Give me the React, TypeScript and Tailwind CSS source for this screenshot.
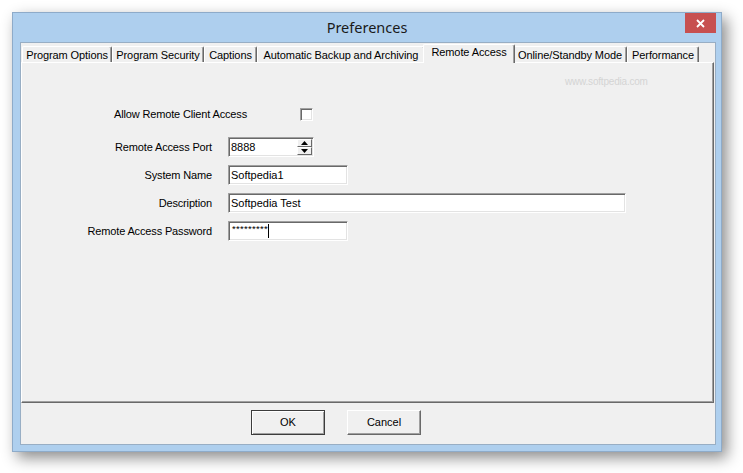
import React from "react";

const tabs = [
  { label: "Program Options", w: "w-[90px]" },
  { label: "Program Security", w: "w-[92px]" },
  { label: "Captions", w: "w-[53px]" },
  { label: "Automatic Backup and Archiving", w: "w-[168px]" },
  { label: "Remote Access", w: "w-[92px]", active: true },
  { label: "Online/Standby Mode", w: "w-[114px]" },
  { label: "Performance", w: "w-[72px]" },
];

const sunken =
  "bg-white border border-t-[#a0a0a0] border-l-[#a0a0a0] border-b-white border-r-white shadow-[inset_1px_1px_0_#696969,inset_-1px_-1px_0_#e3e3e3]";

function Field({ label, children }: { label: string; children: React.ReactNode }) {
  return (
    <div className="flex items-center h-[20px] mt-[8px]">
      <div className="w-[190px] text-right leading-none tracking-[-0.15px]">{label}</div>
      <div className="ml-[16px] h-full">{children}</div>
    </div>
  );
}

function SpinArrow({ up }: { up?: boolean }) {
  return (
    <div className="flex-1 flex items-center justify-center bg-[#f0f0f0] border border-t-white border-l-white border-b-[#696969] border-r-[#696969]">
      <svg width="7" height="4" viewBox="0 0 7 4">
        {up ? <path d="M0 4 L3.5 0 L7 4 Z" fill="#000" /> : <path d="M0 0 L3.5 4 L7 0 Z" fill="#000" />}
      </svg>
    </div>
  );
}

export default function App() {
  return (
    <div
      className="w-[743px] h-[473px] bg-white pt-[12px] pl-[12px] text-[11px] text-black"
      style={{ fontFamily: '"Liberation Sans", Arial, sans-serif' }}
    >
      <div className="w-[710px] h-[440px] flex flex-col bg-[#aecfee] border border-[#8eabc9] shadow-[5px_6px_14px_rgba(0,0,0,0.45)]">
        {/* title bar */}
        <div className="relative h-[29px] flex items-center justify-center">
          <span
            className="text-[14.5px] text-[#1a1a1a] pt-[1px]"
            style={{ fontFamily: '"Noto Sans", "Open Sans", sans-serif' }}
          >
            Preferences
          </span>
          <div className="absolute right-[5px] top-0 w-[31px] h-[20px] bg-[#c75050] flex items-center justify-center">
            <svg width="9" height="9" viewBox="0 0 9 9">
              <path d="M1 1 L8 8 M8 1 L1 8" stroke="#fff" strokeWidth="1.8" />
            </svg>
          </div>
        </div>

        {/* client area */}
        <div className="ml-[7px] w-[696px] h-[403px] bg-[#f0f0f0] border border-[#98aec4] flex flex-col">
          {/* tab strip */}
          <div className="mt-[1px] h-[18px] pl-[1px] flex items-end tracking-[-0.1px]">
            {tabs.map((t) =>
              t.active ? (
                <div
                  key={t.label}
                  className={`${t.w} relative z-10 -mx-[2px] -mb-[1px] h-[19px] flex items-center justify-center pb-[3px] bg-[#f0f0f0] border-t border-l border-white border-r border-r-[#696969] shadow-[inset_-1px_0_0_#a0a0a0] rounded-t-[2px]`}
                >
                  {t.label}
                </div>
              ) : (
                <div
                  key={t.label}
                  className={`${t.w} h-[16px] flex items-center justify-center pt-[1px] bg-[#f0f0f0] border-t border-l border-white border-r border-r-[#696969] shadow-[inset_-1px_0_0_#a0a0a0] rounded-t-[2px] whitespace-nowrap`}
                >
                  {t.label}
                </div>
              )
            )}
          </div>

          {/* tab panel */}
          <div className="relative w-[693px] h-[341px] border-t border-l border-white border-r border-b border-r-[#696969] border-b-[#696969] shadow-[inset_-1px_-1px_0_#a0a0a0] flex flex-col">
            <div className="absolute left-[543px] top-[11px] text-[10px] text-[#d4d4d4] tracking-[-0.2px]">
              www.softpedia.com
            </div>

            <div className="mt-[45px] h-[13px] flex items-center">
              <span className="pl-[92px] w-[278px] leading-none tracking-[-0.15px]">Allow Remote Client Access</span>
              <div className={`w-[13px] h-[13px] ${sunken}`} />
            </div>

            <div className="mt-[8px]">
              <Field label="Remote Access Port">
                <div className={`w-[86px] h-full flex ${sunken}`}>
                  <span className="flex-1 pl-[2px] pt-[2px] leading-[14px]">8888</span>
                  <div className="w-[15px] flex flex-col my-[1px] mr-[1px]">
                    <SpinArrow up />
                    <SpinArrow />
                  </div>
                </div>
              </Field>
            </div>
            <Field label="System Name">
              <div className={`w-[120px] h-full pl-[2px] pt-[2px] leading-[14px] ${sunken}`}>Softpedia1</div>
            </Field>
            <Field label="Description">
              <div className={`w-[398px] h-full pl-[2px] pt-[2px] leading-[14px] ${sunken}`}>Softpedia Test</div>
            </Field>
            <Field label="Remote Access Password">
              <div className={`w-[120px] h-full pl-[3px] pt-[2px] flex items-start ${sunken}`}>
                <span className="text-[9.5px] leading-[9px] tracking-[0.3px]">*********</span>
                <span className="w-[1px] h-[14px] bg-black" />
              </div>
            </Field>
          </div>

          {/* buttons */}
          <div className="pt-[7px] pl-[230px] flex gap-[22px]">
            <div className="w-[74px] h-[25px] flex items-center justify-center border border-[#3c3c3c] bg-[#f0f0f0] shadow-[inset_1px_1px_0_#fff,inset_-1px_-1px_0_#a0a0a0]">
              OK
            </div>
            <div className="w-[74px] h-[25px] flex items-center justify-center bg-[#f0f0f0] border border-t-white border-l-white border-b-[#696969] border-r-[#696969] shadow-[inset_-1px_-1px_0_#a0a0a0]">
              Cancel
            </div>
          </div>
        </div>
      </div>
    </div>
  );
}
